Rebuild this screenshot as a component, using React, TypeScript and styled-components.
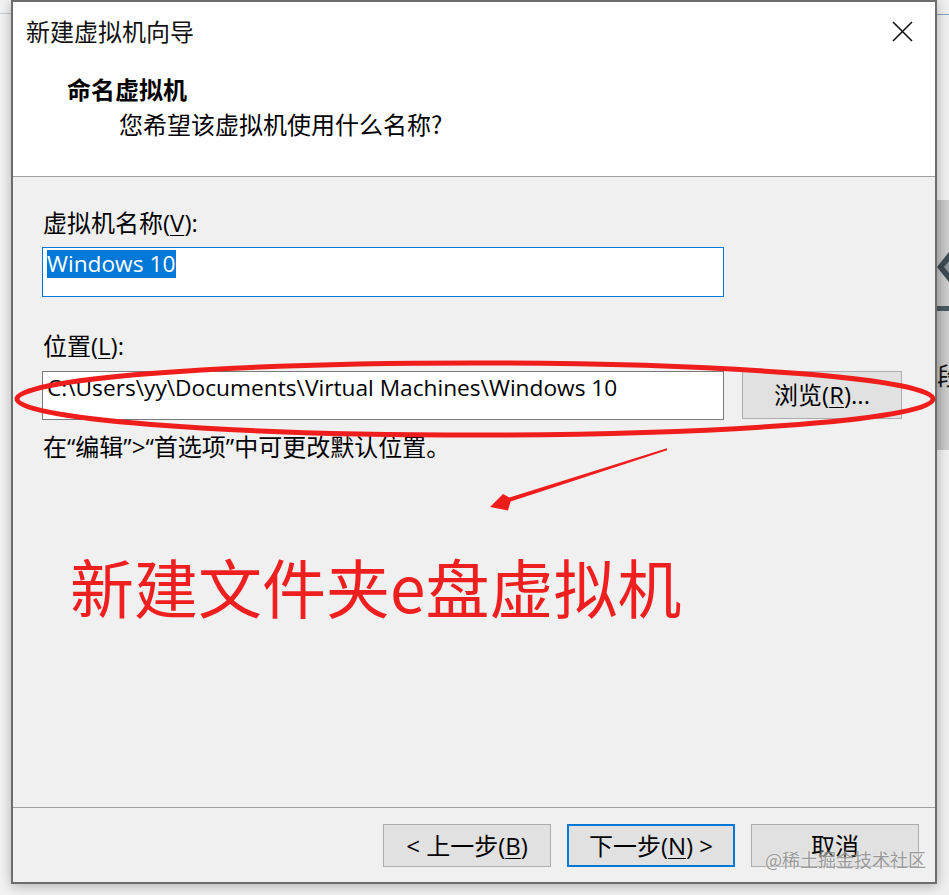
import React from "react";
import styled, { createGlobalStyle } from "styled-components";

const UI_FONT = `"Open Sans", "Noto Sans CJK SC", sans-serif`;
const CJK_FONT = `"Noto Sans CJK SC", sans-serif`;

const GlobalStyle = createGlobalStyle`
  html, body { margin: 0; padding: 0; background: #f2f2f2; }
  #root { width: 949px; height: 895px; }
`;

const Page = styled.div`
  position: relative;
  width: 949px;
  height: 895px;
  display: flex;
  overflow: hidden;
  background: #f2f2f2;
  font-family: ${UI_FONT};
  color: #000;
`;

const LeftEdge = styled.div`
  width: 11px;
  flex: none;
  display: flex;
  flex-direction: column;
  background: #f3f3f3;
`;

const EdgeRule = styled.div<{ $top: number; $color: string; $h?: number }>`
  margin-top: ${(p) => p.$top}px;
  height: ${(p) => p.$h ?? 1}px;
  background: ${(p) => p.$color};
  flex: none;
`;

const Window = styled.div`
  position: relative;
  z-index: 1;
  flex: none;
  width: 926px;
  height: 884px;
  box-sizing: border-box;
  border: 2px solid #6d6d6d;
  background: #f0f0f0;
  display: flex;
  flex-direction: column;
  box-shadow: 0 2px 12px rgba(0, 0, 0, 0.28);
`;

const Header = styled.div`
  flex: none;
  height: 175px;
  box-sizing: border-box;
  background: #fff;
  border-bottom: 1px solid #a0a0a0;
  display: flex;
  flex-direction: column;
`;

const TitleRow = styled.div`
  display: flex;
  justify-content: space-between;
  align-items: flex-start;
  padding: 15px 22px 0 13px;
`;

const Title = styled.div`
  font-family: ${CJK_FONT};
  font-size: 24px;
  line-height: 28px;
  color: #111;
`;

const CloseButton = styled.div`
  width: 21px;
  height: 21px;
  margin-top: 4px;
  display: flex;
`;

const Heading = styled.div<{ $indent: number; $gap: number; $bold?: boolean }>`
  padding-left: ${(p) => p.$indent}px;
  margin-top: ${(p) => p.$gap}px;
  font-family: ${CJK_FONT};
  font-size: 24px;
  line-height: 28px;
  font-weight: ${(p) => (p.$bold ? 700 : 400)};
  color: #000;
`;

const Body = styled.div`
  flex: 1;
  display: flex;
  flex-direction: column;
  align-items: flex-start;
  padding: 32px 0 0 29px;
`;

const Label = styled.div<{ $gap: number }>`
  margin-top: ${(p) => p.$gap}px;
  margin-left: 1px;
  font-size: 24px;
  line-height: 28px;
  color: #000;
`;

const Key = styled.span`
  text-decoration: underline;
  text-underline-offset: 3px;
  text-decoration-thickness: 1px;
`;

const TextBox = styled.div<{ $focused?: boolean; $gap: number; $h: number }>`
  margin-top: ${(p) => p.$gap}px;
  width: 682px;
  height: ${(p) => p.$h}px;
  box-sizing: border-box;
  padding: 2px 4px;
  background: #fff;
  border: 1px solid ${(p) => (p.$focused ? "#0078d7" : "#7a7a7a")};
  font-size: 22.7px;
  line-height: 28px;
  white-space: nowrap;
  overflow: hidden;
`;

const Selected = styled.span`
  display: inline-block;
  background: #0078d7;
  color: #fff;
  padding-right: 1px;
`;

const FieldRow = styled.div`
  margin-top: 11px;
  display: flex;
  gap: 18px;
  align-items: flex-start;
`;

const Button = styled.div<{ $primary?: boolean; $w: number; $h: number }>`
  width: ${(p) => p.$w}px;
  height: ${(p) => p.$h}px;
  box-sizing: border-box;
  background: #e1e1e1;
  border: ${(p) => (p.$primary ? "2px solid #0078d7" : "1px solid #adadad")};
  display: flex;
  align-items: center;
  justify-content: center;
  font-size: 24px;
  line-height: 28px;
  color: #000;
  white-space: pre;
`;

const Hint = styled.div`
  margin-top: 13px;
  margin-left: 1px;
  font-size: 24px;
  line-height: 28px;
  color: #000;
`;

const Annotation = styled.div`
  margin-top: 86px;
  margin-left: 28px;
  font-family: ${CJK_FONT};
  font-size: 64px;
  line-height: 76px;
  color: #ef1f1f;
  white-space: nowrap;
`;

const Footer = styled.div`
  flex: none;
  height: 75px;
  box-sizing: border-box;
  border-top: 1px solid #a0a0a0;
  display: flex;
  justify-content: flex-end;
  align-items: flex-start;
  gap: 16px;
  padding: 16px 16px 0 0;
`;

const RightEdge = styled.div`
  flex: 1;
  display: flex;
  flex-direction: column;
  background: #f0f0f0;
  overflow: hidden;
`;

const GrayPanel = styled.div`
  margin-top: 185px;
  height: 250px;
  background: linear-gradient(90deg, #bdbdbd, #cfcfcf);
  display: flex;
  flex-direction: column;
`;

const Chevron = styled.svg`
  margin-top: 52px;
  flex: none;
`;

const PanelChar = styled.div`
  margin-top: 50px;
  font-family: ${CJK_FONT};
  font-size: 24px;
  line-height: 28px;
  color: #111;
  white-space: nowrap;
`;

const Overlay = styled.svg`
  position: absolute;
  left: 0;
  top: 0;
  z-index: 2;
  pointer-events: none;
`;

const Watermark = styled.div`
  position: absolute;
  left: 765px;
  top: 847px;
  z-index: 3;
  font-family: ${CJK_FONT};
  font-size: 18px;
  line-height: 24px;
  color: rgba(130, 130, 130, 0.8);
  text-shadow: 0 0 2px rgba(255, 255, 255, 0.9);
  white-space: nowrap;
`;

export default function App() {
  return (
    <>
      <GlobalStyle />
      <Page>
        <LeftEdge>
          <EdgeRule $top={13} $color="#c6ccd4" />
        </LeftEdge>

        <Window>
          <Header>
            <TitleRow>
              <Title>新建虚拟机向导</Title>
              <CloseButton>
                <svg width="21" height="21" viewBox="0 0 21 21">
                  <path d="M1 1 L20 20 M20 1 L1 20" stroke="#111" strokeWidth="1.6" fill="none" />
                </svg>
              </CloseButton>
            </TitleRow>
            <Heading $indent={54} $gap={30} $bold>
              命名虚拟机
            </Heading>
            <Heading $indent={106} $gap={7}>
              您希望该虚拟机使用什么名称?
            </Heading>
          </Header>

          <Body>
            <Label $gap={0}>
              虚拟机名称(<Key>V</Key>):
            </Label>
            <TextBox $focused $gap={10} $h={50}>
              <Selected>Windows 10</Selected>
            </TextBox>
            <Label $gap={35}>
              位置(<Key>L</Key>):
            </Label>
            <FieldRow>
              <TextBox $gap={0} $h={49}>
                C:\Users\yy\Documents\Virtual Machines\Windows 10
              </TextBox>
              <Button $w={160} $h={48}>
                浏览(<Key>R</Key>)...
              </Button>
            </FieldRow>
            <Hint>在“编辑”&gt;“首选项”中可更改默认位置。</Hint>
            <Annotation>新建文件夹e盘虚拟机</Annotation>
          </Body>

          <Footer>
            <Button $w={168} $h={43}>
              {"< 上一步("}
              <Key>B</Key>)
            </Button>
            <Button $w={168} $h={43} $primary>
              下一步(<Key>N</Key>){" >"}
            </Button>
            <Button $w={168} $h={43}>
              取消
            </Button>
          </Footer>
        </Window>

        <RightEdge>
          <EdgeRule $top={14} $color="#86a4c4" />
          <GrayPanel>
            <Chevron width="12" height="30" viewBox="0 0 12 30">
              <polygon points="0,15 12,0 12,30" fill="#3c4a51" />
              <polygon points="7,15 12,9 12,21" fill="#8a9499" />
            </Chevron>
            <EdgeRule $top={24} $h={5} $color="#4a5960" />
            <PanelChar>段</PanelChar>
          </GrayPanel>
        </RightEdge>

        <Overlay width="949" height="895" viewBox="0 0 949 895">
          <ellipse cx="475" cy="399" rx="458" ry="36" fill="none" stroke="#f01d1d" strokeWidth="5" />
          <polygon
            points="667,448.3 509.4,497.6 503,494 490,507 508,510.5 510.6,501.4 667,450.2"
            fill="#f01d1d"
          />
        </Overlay>

        <Watermark>@稀土掘金技术社区</Watermark>
      </Page>
    </>
  );
}
